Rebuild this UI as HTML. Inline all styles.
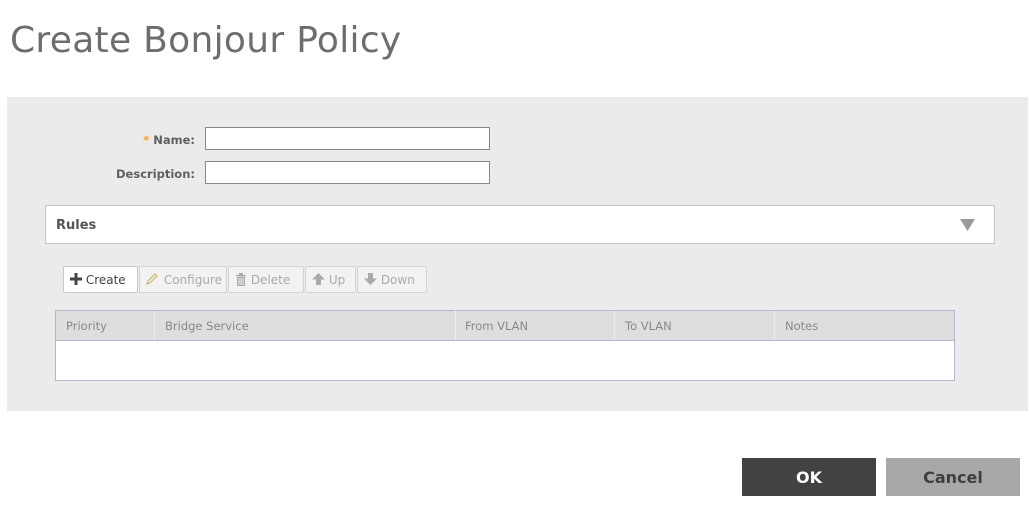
<!DOCTYPE html>
<html><head><style>
body{margin:0;width:1029px;height:511px;background:#fff;font-family:"DejaVu Sans","Liberation Sans",sans-serif;position:relative;overflow:hidden}
.a{position:absolute}
h1{position:absolute;left:10px;top:20px;margin:0;font-weight:normal;font-size:36px;color:#6d6d6d;letter-spacing:0.3px}
.panel{left:7px;top:97px;width:1021px;height:314px;background:#ebebeb}
.lbl{font-size:11.5px;font-weight:bold;color:#5f5f5f;text-align:right;width:120px}
.inp{background:#fff;border:1px solid #888;width:283px;height:21px}
.btn{top:266px;height:27px;border:1px solid #d4d4d4;border-radius:2px;background:#f2f2f2;font-size:12px;color:#aaa;line-height:27px;box-sizing:border-box;padding-left:6px}
.col{top:311px;height:29px;line-height:30px;font-size:11.5px;color:#888;border-left:1px dotted #fff}
</style></head><body>
<h1>Create Bonjour Policy</h1>
<div class="a panel"></div>
<div class="a lbl" style="left:75px;top:133px"><span style="color:#f0a030">*</span> Name:</div>
<div class="a inp" style="left:205px;top:127px"></div>
<div class="a lbl" style="left:75px;top:167px">Description:</div>
<div class="a inp" style="left:205px;top:161px"></div>
<div class="a" style="left:45px;top:205px;width:948px;height:37px;background:#fff;border:1px solid #c4c4c4"></div>
<div class="a" style="left:56px;top:218px;font-size:13px;font-weight:bold;color:#555">Rules</div>
<svg class="a" style="left:960px;top:219px" width="15" height="12"><path d="M0 0H15L7.5 12Z" fill="#9a9a9a"/></svg>
<div class="a btn" style="left:63px;width:75px;background:#fff;color:#444;border-color:#c8c8c8"><svg width="12" height="12" style="vertical-align:-1px"><path d="M4.5 0h3v4.5H12v3H7.5V12h-3V7.5H0v-3h4.5z" fill="#444"/></svg> Create</div>
<div class="a btn" style="left:139px;width:88px"><svg width="14" height="12" style="vertical-align:-1px"><path d="M1 11l1-3 7-7 2 2-7 7z" fill="#eee" stroke="#c8b060"/></svg> Configure</div>
<div class="a btn" style="left:228px;width:76px"><svg width="12" height="13" style="vertical-align:-2px"><path d="M1 2h10v1.5H1zM4 0h4v2H4zM2 4h8v9H2z" fill="#aaa"/><path d="M4 5v7M6 5v7M8 5v7" stroke="#f2f2f2"/></svg> Delete</div>
<div class="a btn" style="left:305px;width:51px"><svg width="13" height="12" style="vertical-align:-1px"><path d="M6.5 0L13 6.5H9V12H4V6.5H0z" fill="#aaa"/></svg> Up</div>
<div class="a btn" style="left:357px;width:70px"><svg width="13" height="12" style="vertical-align:-1px"><path d="M6.5 12L13 5.5H9V0H4V5.5H0z" fill="#aaa"/></svg> Down</div>
<div class="a" style="left:55px;top:310px;width:898px;height:69px;background:#fff;border:1px solid #b4b8cc"></div>
<div class="a" style="left:56px;top:311px;width:898px;height:29px;background:#dedede;border-bottom:1px solid #b4b8cc"></div>
<div class="a col" style="left:56px;width:98px;padding-left:10px;border-left:none">Priority</div>
<div class="a col" style="left:154px;padding-left:10px">Bridge Service</div>
<div class="a col" style="left:455px;padding-left:9px">From VLAN</div>
<div class="a col" style="left:614px;padding-left:10px">To VLAN</div>
<div class="a col" style="left:774px;padding-left:10px">Notes</div>
<div class="a" style="left:742px;top:458px;width:134px;height:38px;background:#424242;color:#fff;font-weight:bold;font-size:16px;text-align:center;line-height:40px">OK</div>
<div class="a" style="left:886px;top:458px;width:134px;height:38px;background:#a8a8a8;color:#3e3e3e;font-weight:bold;font-size:16px;text-align:center;line-height:40px">Cancel</div>
</body></html>
